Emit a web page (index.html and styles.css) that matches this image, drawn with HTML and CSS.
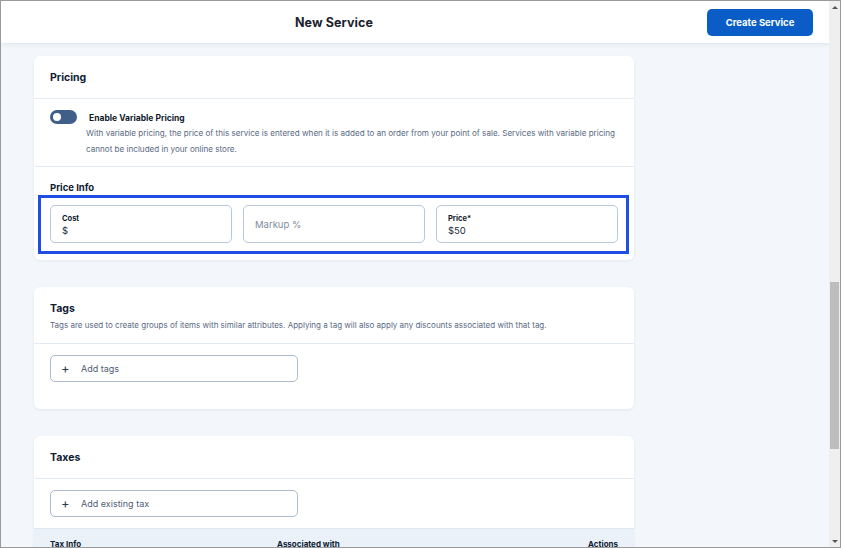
FILE: index.html
```html
<!DOCTYPE html>
<html lang="en">
<head>
<meta charset="utf-8">
<title>New Service</title>
<link rel="stylesheet" href="styles.css">
</head>
<body>
<div class="frame">
  <div class="viewport">
    <header class="topbar">
      <div class="title-zone"><h1 class="page-title">New Service</h1></div>
      <button class="btn-primary">Create Service</button>
    </header>
    <main class="content">
      <section class="card">
        <div class="card-head"><h2 class="card-title">Pricing</h2></div>
        <div class="toggle-row">
          <span class="toggle"><span class="knob"></span></span>
          <div class="toggle-text">
            <div class="toggle-label">Enable Variable Pricing</div>
            <p class="toggle-desc">With variable pricing, the price of this service is entered when it is added to an order from your point of sale. Services with variable pricing cannot be included in your online store.</p>
          </div>
        </div>
        <div class="price-info">
          <h3 class="sub-title">Price Info</h3>
          <div class="price-row">
            <div class="field"><span class="field-label">Cost</span><span class="field-value">$</span></div>
            <div class="field field-empty"><span class="field-placeholder">Markup %</span></div>
            <div class="field"><span class="field-label">Price*</span><span class="field-value">$50</span></div>
            <div class="highlight"></div>
          </div>
        </div>
      </section>

      <section class="card">
        <div class="card-head card-head-desc">
          <h2 class="card-title">Tags</h2>
          <p class="card-desc">Tags are used to create groups of items with similar attributes. Applying a tag will also apply any discounts associated with that tag.</p>
        </div>
        <div class="card-body pad-bottom">
          <button class="add-btn"><span class="plus">+</span>Add tags</button>
        </div>
      </section>

      <section class="card">
        <div class="card-head"><h2 class="card-title">Taxes</h2></div>
        <div class="card-body">
          <button class="add-btn"><span class="plus">+</span>Add existing tax</button>
        </div>
        <div class="table-head">
          <span class="th th-info">Tax Info</span>
          <span class="th th-assoc">Associated with</span>
          <span class="th th-actions">Actions</span>
        </div>
      </section>
    </main>
  </div>
  <div class="scrollbar">
    <span class="arrow arrow-up"></span>
    <div class="track"><div class="thumb"></div></div>
    <span class="arrow arrow-down"></span>
  </div>
</div>
</body>
</html>
```

FILE: styles.css
```css
* { box-sizing: border-box; }
html, body { margin: 0; padding: 0; }
body {
  font-family: Inter, "Noto Sans", Arial, sans-serif;
  color: #13213a;
  background: #ffffff;
}
.frame {
  width: 841px;
  height: 548px;
  border: 1px solid #9a9a9a;
  display: flex;
  overflow: hidden;
}
.viewport {
  flex: 1;
  display: flex;
  flex-direction: column;
  background: #f3f7fb;
  overflow: hidden;
  min-width: 0;
}
.topbar {
  height: 42px;
  flex: none;
  background: #fff;
  display: flex;
  align-items: center;
  box-shadow: 0 2px 4px rgba(30, 60, 100, 0.08);
  position: relative;
  z-index: 1;
}
.title-zone {
  width: 600px;
  margin-left: 33px;
  text-align: center;
}
.page-title {
  margin: 0;
  font-size: 12.5px;
  font-weight: 700;
  color: #1c2230;
  letter-spacing: 0.1px;
}
.btn-primary {
  margin-left: auto;
  margin-right: 16px;
  width: 106px;
  height: 27px;
  margin-top: 1px;
  border: none;
  border-radius: 5px;
  background: #0a5dc6;
  color: #fff;
  font-family: inherit;
  font-size: 9.5px;
  font-weight: 700;
}
.content {
  padding: 13px 0 0 33px;
  display: flex;
  flex-direction: column;
  gap: 27px;
}
.card {
  width: 600px;
  background: #fff;
  border-radius: 6px;
  box-shadow: 0 1px 3px rgba(30, 60, 100, 0.08);
  flex: none;
}
.card-head {
  height: 43px;
  padding: 0 16px;
  display: flex;
  align-items: center;
  border-bottom: 1px solid #e4ebf3;
}
.card-head-desc {
  height: 57px;
  flex-direction: column;
  align-items: flex-start;
  justify-content: flex-start;
  padding-top: 15px;
}
.card-title {
  margin: 0;
  font-size: 10.5px;
  font-weight: 700;
  color: #0f1c33;
}
.card-desc {
  margin: 5px 0 0;
  font-size: 8px;
  color: #5a6a82;
  line-height: 11px;
}
.toggle-row {
  display: flex;
  padding: 11px 16px 0;
  height: 68px;
  border-bottom: 1px solid #e4ebf3;
}
.toggle {
  width: 27px;
  height: 14px;
  border-radius: 7px;
  background: #3f5f89;
  flex: none;
  position: relative;
  margin-right: 9px;
}
.knob {
  position: absolute;
  left: 3px;
  top: 3px;
  width: 8px;
  height: 8px;
  border-radius: 50%;
  background: #fff;
}
.toggle-text { padding-left: 3px; }
.toggle-label {
  font-size: 8.5px;
  font-weight: 700;
  color: #101a2c;
  line-height: 14px;
  margin-top: 1px;
}
.toggle-desc {
  margin: 0 0 0 -3px;
  font-size: 8.1px;
  line-height: 16px;
  color: #5a6a82;
}
.price-info {
  padding: 14px 16px 17px;
}
.sub-title {
  margin: 0 0 10px;
  font-size: 9.5px;
  font-weight: 700;
  color: #0f1c33;
  line-height: 14px;
}
.price-row {
  position: relative;
  display: grid;
  grid-template-columns: repeat(3, 1fr);
  gap: 11px;
}
.field {
  height: 38px;
  border: 1px solid #b8c8dd;
  border-radius: 5px;
  padding: 7px 11px 0;
  display: flex;
  flex-direction: column;
}
.field-empty { justify-content: center; padding-top: 0; }
.field-label {
  font-size: 7.5px;
  font-weight: 700;
  color: #101a2c;
  line-height: 11px;
}
.field-value {
  font-size: 9.5px;
  color: #1d2a40;
  line-height: 14px;
}
.field-placeholder {
  font-size: 9.5px;
  color: #7f8ca0;
}
.highlight {
  position: absolute;
  left: -12px;
  right: -11px;
  top: -10px;
  bottom: -11px;
  border: 3px solid #1f4fe0;
  pointer-events: none;
}
.card-body {
  padding: 11px 16px 11px;
}
.pad-bottom { padding-bottom: 27px; }
.add-btn {
  width: 248px;
  height: 27px;
  border: 1px solid #aebcd0;
  border-radius: 5px;
  background: #fff;
  display: flex;
  align-items: center;
  padding: 0 0 0 10px;
  font-family: inherit;
  font-size: 9px;
  color: #4f5e75;
}
.plus {
  font-size: 13px;
  color: #2b3a52;
  width: 20px;
  text-align: left;
  line-height: 1;
}
.table-head {
  background: #eaf1f9;
  border-top: 1px solid #dfe7f1;
  height: 40px;
  display: flex;
  padding: 10px 16px 0;
}
.th {
  font-size: 8px;
  font-weight: 700;
  color: #0f1c33;
}
.th-info { width: 227px; }
.th-assoc { flex: 1; }
.scrollbar {
  width: 11px;
  flex: none;
  background: #efefef;
  display: flex;
  flex-direction: column;
  align-items: center;
}
.arrow {
  flex: none;
  width: 0;
  height: 0;
  border-left: 3px solid transparent;
  border-right: 3px solid transparent;
  margin: 5px 0;
}
.arrow-up { border-bottom: 3px solid #555; }
.arrow-down { border-top: 3px solid #555; margin-bottom: 4px; }
.track {
  flex: 1;
  width: 100%;
  padding: 268px 1px 0;
}
.thumb {
  height: 167px;
  background: #bdbdbd;
}
```
